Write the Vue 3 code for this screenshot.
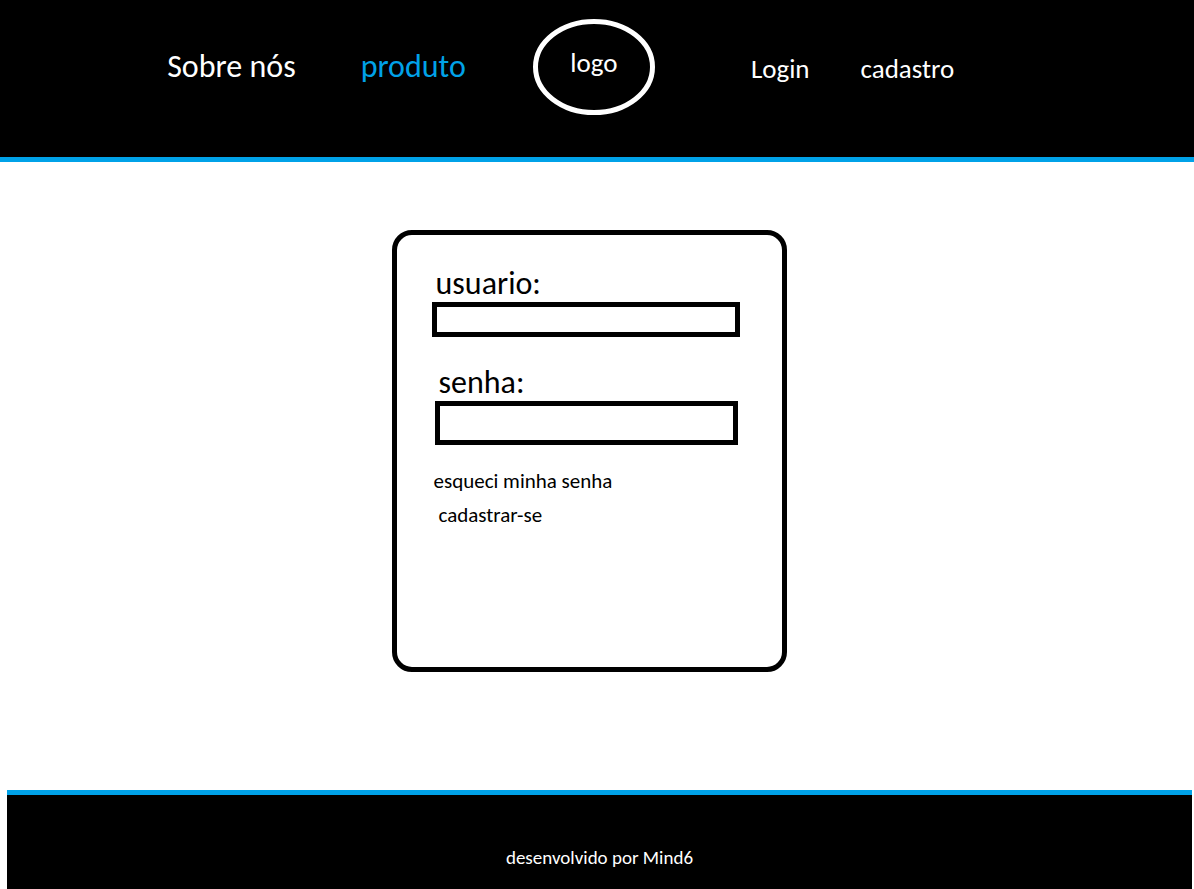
<script setup>
import { ref } from 'vue'
const user = ref('')
const password = ref('')
</script>

<template>
  <div class="page">
    <header class="top">
      <nav class="nav">
        <a class="link about" href="#sobre">Sobre nós</a>
        <a class="link product" href="#produto">produto</a>
        <a class="logo" href="#inicio">
          <svg class="ring" viewBox="0 0 122 96" aria-hidden="true">
            <ellipse cx="61" cy="48" rx="58.5" ry="45.5" fill="none" stroke="#fff" stroke-width="5" />
          </svg>
          <span class="logo-text">logo</span>
        </a>
        <a class="link small login" href="#login">Login</a>
        <a class="link small signup" href="#cadastro">cadastro</a>
      </nav>
    </header>
    <main class="main">
      <form class="card" @submit.prevent>
        <label class="label" for="user">usuario:</label>
        <input id="user" v-model="user" class="field" type="text" />
        <div class="group">
          <label class="label" for="password">senha:</label>
          <input id="password" v-model="password" class="field tall" type="password" />
        </div>
        <a class="help forgot" href="#senha">esqueci minha senha</a>
        <a class="help register" href="#cadastro">cadastrar-se</a>
      </form>
    </main>
    <footer class="bottom">desenvolvido por Mind6</footer>
  </div>
</template>

<style>
body {
  margin: 0;
  background: #fff;
}
</style>

<style scoped>
.page {
  display: flex;
  flex-direction: column;
  min-height: 100vh;
  font-family: Carlito, Calibri, Lato, "Open Sans", sans-serif;
  color: #000;
}
.page * {
  box-sizing: border-box;
}
a {
  color: inherit;
  text-decoration: none;
}
.top {
  background: #000;
  border-bottom: 5px solid #00a2e8;
  color: #fff;
}
.nav {
  display: flex;
  align-items: flex-start;
  min-height: 157px;
  padding-left: 14%;
}
.link {
  margin-top: 48px;
  font-size: 32px;
  line-height: 38px;
  white-space: nowrap;
}
.product {
  margin-left: 65px;
  color: #00a2e8;
}
.logo {
  display: grid;
  flex: none;
  width: 122px;
  height: 96px;
  margin: 19px 0 0 67px;
}
.ring,
.logo-text {
  grid-area: 1 / 1;
}
.logo-text {
  padding-top: 28px;
  text-align: center;
  font-size: 27px;
  line-height: 32px;
}
.small {
  font-size: 27px;
  line-height: 42px;
}
.login {
  margin-left: 96px;
}
.signup {
  margin-left: 51px;
}
.main {
  flex: 1;
  padding: 68px 16px 118px 0;
}
.card {
  display: flex;
  flex-direction: column;
  align-items: flex-start;
  width: 395px;
  max-width: 100%;
  min-height: 442px;
  margin: 0 auto;
  padding: 30px 42px 30px 35px;
  border: 5px solid #000;
  border-radius: 20px;
}
.label {
  display: block;
  padding-left: 4px;
  font-size: 32px;
  line-height: 37px;
}
.group {
  width: 100%;
  margin-top: 27px;
  padding: 0 2px 0 3px;
}
.field {
  display: block;
  width: 100%;
  height: 35px;
  padding: 0 8px;
  border: 5px solid #000;
  border-radius: 0;
  background: #fff;
  font: inherit;
  font-size: 19px;
  outline: none;
}
.tall {
  height: 44px;
}
.help {
  font-size: 21px;
  line-height: 24px;
}
.forgot {
  margin-top: 24px;
  padding-left: 2px;
}
.register {
  margin-top: 10px;
  padding-left: 7px;
}
.bottom {
  margin: 0 2px 0 7px;
  padding: 50px 0 19px;
  border-top: 5px solid #00a2e8;
  background: #000;
  color: #fff;
  text-align: center;
  font-size: 19px;
  line-height: 25px;
}
</style>
